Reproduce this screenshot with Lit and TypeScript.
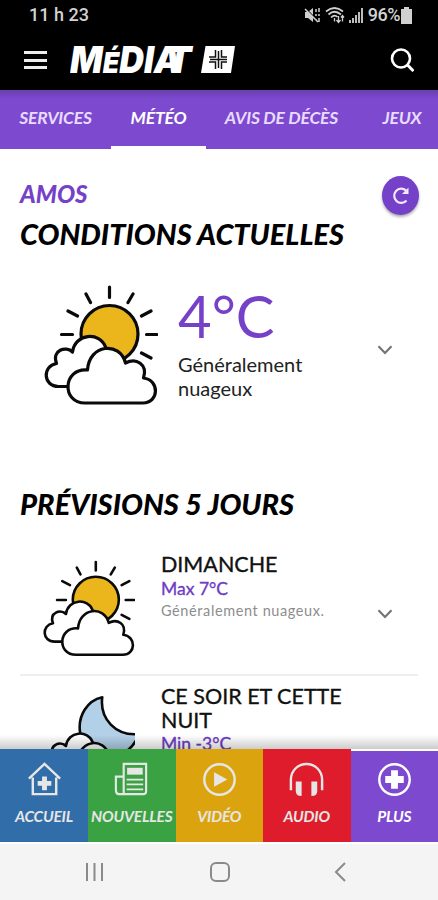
import { LitElement, html, css, svg } from "lit";
import { customElement, property } from "lit/decorators.js";

const chevron = html`<svg width="16" height="10" viewBox="0 0 16 10" fill="none" stroke="#737373" stroke-width="2.1"><path d="M1.5 1.3 8 8 14.500 1.300" /></svg>`;

const clouds = svg`
  <path d="M45 104.500H24.500A11.800 11.800 0 0 1 22.500 81.500Q19.500 66.500 31.500 66.500Q37 66.500 39.500 70Q41.500 54.500 56.500 54.500Q69 54.500 74 67L62 98Z" stroke="none" fill="#fff"/>
  <path d="M37 104.500H25.500C10 104.500 9 84 23.500 81.500C18.500 68 33 63.500 39.500 70C42 51 67 49.500 72.500 65"/>
  <path d="M52 121H110C126 121 127 98 110.500 96C115 82 103 75.500 92.500 81C87 59 56 62 54.500 88C30 85.500 28 121 52 121Z" fill="#fff"/>`;

@customElement("weather-icon")
export class WeatherIcon extends LitElement {
  @property() kind = "sun";
  static styles = css`
    :host { display: block; }
    svg { display: block; width: 100%; height: 100%; }
  `;
  render() {
    return html`<svg viewBox="0 0 125 130" preserveAspectRatio="none" fill="none" stroke="#0a0a0a" stroke-width="3.200" stroke-linecap="round" stroke-linejoin="round">
      ${this.kind === "sun"
        ? svg`<circle cx="76.500" cy="52" r="28.500" fill="#ebb51c"/>
          <path d="M76.500 5V15.500M53 12l4.500 8.500M100 12l-5 8.500M35 29l9.500 5M118 29l-9.500 5M28.500 52.500H39.500M113.500 52.500H124M108.500 71l9.500 5"/>`
        : svg`<path d="M57 53C54 32 66 13 84.500 9C81 36 101 58 130 55C125 70 115 77 107 82L75 80Z" fill="#b3d0e9"/>`}
      ${clouds}
    </svg>`;
  }
}

@customElement("status-bar")
export class StatusBar extends LitElement {
  static styles = css`
    :host { display: flex; align-items: center; justify-content: space-between; height: 30px; padding: 0 26px 0 29px; background: #000; color: #d2d2d2; font: 500 18px/30px Roboto, sans-serif; }
    .icons { display: flex; align-items: center; gap: 4px; }
    .pct { letter-spacing: -0.5px; }
    .batt { margin-left: -3px; }
  `;
  render() {
    return html`<span>11 h 23</span>
      <div class="icons">
        <svg width="17" height="18" viewBox="0 0 17 18" fill="#cfcfcf"><path d="M1 6h3l5-4v14l-5-4H1z"/><path d="M1 2l14 14" stroke="#000" stroke-width="1.500"/><path d="M1 3l13 13M12 3v3M15 2v4M12 8v2M15 8v2M15 12v4M12 13v2" stroke="#cfcfcf" stroke-width="1.500"/></svg>
        <svg width="20" height="18" viewBox="0 0 20 18" fill="none" stroke="#cfcfcf" stroke-width="1.700"><path d="M1 5.500Q9.500-1.500 18 5.500M3.500 8.500Q9.500 3 16 8.500M6 11.500Q9.500 8 12.500 11"/><path d="M9.500 12v3.500M13.500 10v6m-2-2 2 2.500 2-2.500M17.500 15.500v-6m-1.500 2 1.500-2 1.500 2" stroke-width="1.300"/></svg>
        <svg width="15" height="16" viewBox="0 0 15 16" fill="#bdbdbd"><path d="M0 13h2v3H0zM3 11h2v5H3zM6 8h2v8H6zM9 5h2v11H9zM12 1h2v15h-2z"/></svg>
        <span class="pct">96%</span>
        <svg class="batt" width="11" height="17" viewBox="0 0 11 17" fill="#d0d0d0"><path d="M3 0h5v2h3v15H0V2h3z"/></svg>
      </div>`;
  }
}

@customElement("app-bar")
export class AppBar extends LitElement {
  static styles = css`
    :host { display: flex; align-items: center; height: 60px; padding: 0 24px; background: #000; }
    .menu { display: flex; flex-direction: column; gap: 4.500px; width: 23px; }
    .menu i { height: 3px; background: #eee; }
    .logo { margin: 0 auto 0 23px; }
    .word { font: italic 900 37px Inter, sans-serif; fill: #fff; }
    .accent { font-size: 29px; }
    svg { display: block; }
  `;
  render() {
    return html`<div class="menu"><i></i><i></i><i></i></div>
      <svg class="logo" width="166" height="32" viewBox="0 0 166 32">
        <text class="word" x="0" y="29" textLength="111" lengthAdjust="spacingAndGlyphs">M<tspan class="accent">É</tspan>DIA</text>
        <text class="word" x="96" y="29">T</text>
        <path d="M130 0h36v32h-40z" fill="#000"/>
        <path d="M135.500 2H165l-4 27h-30z" fill="#fff"/>
        <path d="M145.500 6v7H139M151.500 6v7H157M145.500 25v-7H139M151.500 25v-7H157M148.500 7v17M140 15.500h17" fill="none" stroke="#111" stroke-width="1.500"/>
      </svg>
      <svg width="24" height="24" viewBox="0 0 24 24" fill="none" stroke="#fff" stroke-width="2.600"><circle cx="11" cy="10.500" r="9"/><path d="M17 16.500l6.500 6.500" stroke-width="3"/></svg>`;
  }
}

@customElement("tab-strip")
export class TabStrip extends LitElement {
  static styles = css`
    :host { display: flex; height: 59px; overflow: hidden; color: #e9dbff; white-space: nowrap; font: italic 700 17.500px/56px Lato, sans-serif; letter-spacing: -0.2px;
      background: linear-gradient(#6a3fb0, #7d49cf 9px); }
    span { box-sizing: border-box; flex: none; text-align: center; border-bottom: 3px solid transparent; }
    .a { width: 111px; }
    .b { width: 95px; color: #fff; border-color: #fff; }
    .c { width: 151px; }
    .d { width: 90px; }
  `;
  render() {
    return html`<span class="a">SERVICES</span><span class="b">MÉTÉO</span><span class="c">AVIS DE DÉCÈS</span><span class="d">JEUX</span>`;
  }
}

@customElement("forecast-row")
export class ForecastRow extends LitElement {
  @property() kind = "sun";
  @property() day = "";
  @property() temp = "";
  @property() note = "";
  static styles = css`
    :host { display: flex; margin: 0 20px; border-bottom: 2px solid #efefef; font-family: Lato, sans-serif; height: 121px; flex: none; }
    weather-icon { width: 101px; height: 104px; margin: 5px 26px 0 14px; flex: none; }
    .text { width: 190px; }
    .day { font-size: 21.500px; line-height: 23.500px; color: #111; -webkit-text-stroke: 0.35px #111; }
    .temp { font-size: 17.500px; line-height: 24px; color: #6f3cc4; -webkit-text-stroke: 0.35px #6f3cc4; }
    .note { font-size: 14.500px; line-height: 20px; color: #8d8d8d; letter-spacing: 0.6px; }
    svg { margin: auto 25px auto auto; display: block; }
    .go { display: flex; flex: 1; height: 121px; }
    :host([kind="moon"]) .go { height: 145px; }
  `;
  render() {
    return html`<weather-icon .kind=${this.kind}></weather-icon>
      <div class="text"><div class="day">${this.day}</div><div class="temp">${this.temp}</div><div class="note">${this.note}</div></div>
      <div class="go">${chevron}</div>`;
  }
}

const tabs = [
  ["ACCUEIL", "blue", svg`<path d="M4 18 20 3l16 15M8 17v17h24V17"/><path d="M17.500 16h5v4.500H27v5h-4.500V30h-5v-4.500H13v-5h4.500z" fill="currentColor" stroke="none"/>`],
  ["NOUVELLES", "green", svg`<path d="M12 34V3h23v28q0 3-3 3H7q-3 0-3-4V16h8" stroke-width="2.200"/><path d="M15.500 7h16v7h-16z" fill="currentColor" stroke="none"/><path d="M15 19h17M15 24h17M15 29h17" stroke-width="1.800"/>`],
  ["VIDÉO", "gold", svg`<circle cx="20" cy="19" r="15.600"/><path d="M14.500 11.500 28 19l-13.500 7.500z" fill="currentColor" stroke="none"/>`],
  ["AUDIO", "red", svg`<path d="M4 30V19a16 16 0 0 1 32 0V30"/><path d="M9 21h6v15q-6 0-6-5zM25 21h6v10q0 5-6 5z" fill="currentColor" stroke="none"/>`],
  ["PLUS", "purple", svg`<circle cx="20" cy="19" r="15.600"/><path d="M16.500 9.500h7v6h6v7h-6v6h-7v-6h-6v-7h6z" fill="currentColor" stroke="none"/>`],
] as const;

@customElement("bottom-nav")
export class BottomNav extends LitElement {
  static styles = css`
    :host { display: grid; grid-template-columns: 88px 87.500px 87.500px 87.500px 87.500px; height: 93px; }
    .tab { display: flex; flex-direction: column; align-items: center; color: #e6e6e6; font: italic 700 15.500px/20px Lato, sans-serif; padding-top: 12px; letter-spacing: -0.2px; }
    svg { display: block; width: 39px; height: 39px; margin-bottom: 6px; fill: none; stroke: currentColor; stroke-width: 2.500px; }
    .blue { background: #316da9; } .green { background: #3aa243; } .gold { background: #dba40f; } .red { background: #de1c2b; }
    .purple { background: #7d49cf; color: #fff; margin-top: 2px; padding-top: 10px; }
  `;
  render() {
    return html`${tabs.map(([label, tone, icon]) => html`<div class="tab ${tone}"><svg viewBox="0 0 40 40">${icon}</svg>${label}</div>`)}`;
  }
}

@customElement("system-nav")
export class SystemNav extends LitElement {
  static styles = css`
    :host { display: flex; justify-content: space-between; align-items: center; height: 58px; padding: 0 92px 0 85px; box-sizing: border-box; background: #f4f4f4; border-top: 2px solid #fff; }
    svg { fill: none; stroke: #8a8a8a; stroke-width: 2px; }
  `;
  render() {
    return html`<svg width="20" height="20"><path d="M2 1v18M9.500 1v18M17 1v18"/></svg>
      <svg width="22" height="22"><rect x="2" y="2" width="18" height="18" rx="5"/></svg>
      <svg width="12" height="20"><path d="M11 1 2 10l9 9"/></svg>`;
  }
}

@customElement("app-root")
export class AppRoot extends LitElement {
  static styles = css`
    :host { display: flex; flex-direction: column; width: 438px; height: 900px; overflow: hidden; background: #fff; font-family: Lato, sans-serif; }
    main { flex: 1; min-height: 0; overflow: hidden; position: relative; display: flex; flex-direction: column; }
    main::after { content: ""; position: absolute; inset: auto 0 0 0; height: 14px; background: linear-gradient(#0000, #0003); }
    .head { display: flex; justify-content: space-between; padding: 27px 19px 0 20px; height: 40px; flex: none; }
    .city { color: #7541c8; font: italic 900 24px/36px Lato, sans-serif; }
    h2 { margin: 0 20px; font: italic 900 29px/36px Lato, sans-serif; color: #000; flex: none; white-space: nowrap; }
    .refresh { display: grid; place-items: center; width: 37px; height: 39px; border-radius: 50%; background: #7541c8; box-shadow: 0 2px 3px #0005; }
    .now { display: flex; height: 144px; margin: 21px 20px 69px; flex: none; }
    .now weather-icon { width: 125px; height: 130px; margin: 9px 20px 0 13px; }
    .big { font-size: 58px; line-height: 70px; color: #7541c8; margin-top: 8px; white-space: nowrap; }
    .desc { font-size: 20px; line-height: 23.500px; color: #222; margin-top: 2px; width: 150px; }
    .now > svg { margin: 72px 25px 0 auto; }
    forecast-row.first { margin-top: 31px; }
    forecast-row.second { margin-top: 9px; }
  `;
  render() {
    return html`<status-bar></status-bar><app-bar></app-bar><tab-strip></tab-strip>
      <main>
        <div class="head"><span class="city">AMOS</span>
          <div class="refresh"><svg width="20" height="20" viewBox="0 0 20 20" fill="none" stroke="#f1e9ff" stroke-width="2.200"><path d="M15.500 14.500A7 7.200 0 1 1 15 4.500"/><path d="M17.500 1.500v6.500h-6.500z" fill="#f1e9ff" stroke="none"/></svg></div>
        </div>
        <h2>CONDITIONS ACTUELLES</h2>
        <div class="now"><weather-icon></weather-icon>
          <div><div class="big">4°C</div><div class="desc">Généralement nuageux</div></div>${chevron}
        </div>
        <h2 class="prev">PRÉVISIONS 5 JOURS</h2>
        <forecast-row class="first" day="DIMANCHE" temp="Max 7°C" note="Généralement nuageux."></forecast-row>
        <forecast-row class="second" kind="moon" day="CE SOIR ET CETTE NUIT" temp="Min -3°C" note="Partiellement nuageux."></forecast-row>
      </main>
      <bottom-nav></bottom-nav><system-nav></system-nav>`;
  }
}
